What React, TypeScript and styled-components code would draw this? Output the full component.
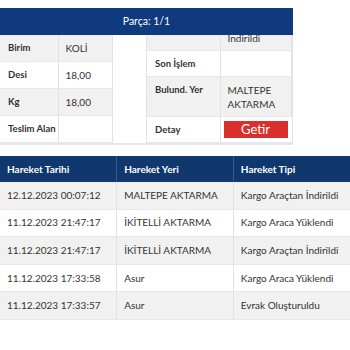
import styled, { createGlobalStyle } from 'styled-components';

const GlobalStyle = createGlobalStyle`
  html, body {
    margin: 0;
    padding: 0;
    background: #ffffff;
  }
  body {
    font-family: Lato, 'Open Sans', 'Liberation Sans', sans-serif;
    color: #333333;
  }
`;

const Page = styled.div`
  padding-top: 8px;
  width: 350px;
`;

const Panel = styled.section`
  width: 293px;
  border-bottom: 2px solid #e4e6ea;
`;

const PanelHeader = styled.div`
  height: 27px;
  line-height: 27px;
  background: #0f3a7d;
  color: #ffffff;
  font-size: 10.5px;
  text-align: center;
`;

const PanelBody = styled.div`
  display: grid;
  grid-template-columns: 147px 146px;
  grid-template-rows: 108px;
  overflow: hidden;
`;

const LeftCol = styled.div`
  border-right: 1px solid #e2e2e2;
  overflow: hidden;
`;

// rows sit at the bottom; whatever does not fit is clipped at the top
const RightCol = styled.div`
  display: flex;
  flex-direction: column;
  justify-content: flex-end;
  overflow: hidden;
  min-height: 0;
  border-right: 1px solid #e2e2e2;
`;

const InfoTable = styled.table<{ $width: number }>`
  width: ${(p) => p.$width}px;
  border-collapse: collapse;
  table-layout: fixed;
  flex-shrink: 0;
  font-size: 10px;
`;

const InfoRow = styled.tr`
  &:nth-child(odd) {
    background: #f1f1f1;
  }
  &:nth-child(even) {
    background: #ffffff;
  }
`;

const InfoLabel = styled.td<{ $pad: number }>`
  font-weight: 700;
  font-size: 9.5px;
  padding: ${(p) => p.$pad}px 8px;
  line-height: 14px;
  vertical-align: top;
  white-space: nowrap;
  border-right: 1px solid #e2e2e2;
  border-bottom: 1px solid #e8e8e8;
`;

const InfoValue = styled.td<{ $pad: number }>`
  padding: ${(p) => p.$pad}px 6px ${(p) => p.$pad}px 7px;
  line-height: 14px;
  vertical-align: top;
  border-right: 1px solid #e2e2e2;
  border-bottom: 1px solid #e8e8e8;
`;

const ButtonCell = styled.td`
  padding: 4px 5px 4px 3px;
  border-bottom: 1px solid #e8e8e8;
`;

const FetchButton = styled.button`
  display: block;
  width: 64px;
  height: 17px;
  padding: 0;
  border: none;
  background: #d9302e;
  color: #ffffff;
  font-family: inherit;
  font-size: 13px;
  line-height: 17px;
  cursor: pointer;
`;

const MoveTable = styled.table`
  width: 350px;
  margin-top: 11px;
  border-collapse: collapse;
  table-layout: fixed;
  font-size: 10px;
`;

const MoveHead = styled.th`
  background: #11376f;
  color: #ffffff;
  font-weight: 700;
  text-align: left;
  padding: 6.5px 7px;
  line-height: 13px;
  border-right: 1px solid #3a5a8a;
  &:last-child {
    border-right: none;
  }
`;

const MoveRow = styled.tr`
  &:nth-child(odd) {
    background: #f1f1f1;
  }
  &:nth-child(even) {
    background: #ffffff;
  }
`;

const MoveCell = styled.td`
  padding: 6.8px 7px;
  line-height: 13px;
  border-right: 1px solid #e2e2e2;
  border-bottom: 1px solid #e8e8e8;
  white-space: nowrap;
  &:last-child {
    border-right: none;
  }
`;

const leftRows = [
  ['Birim', 'KOLİ'],
  ['Desi', '18,00'],
  ['Kg', '18,00'],
  ['Teslim Alan', ''],
];

const moves = [
  ['12.12.2023 00:07:12', 'MALTEPE AKTARMA', 'Kargo Araçtan İndirildi'],
  ['11.12.2023 21:47:17', 'İKİTELLİ AKTARMA', 'Kargo Araca Yüklendi'],
  ['11.12.2023 21:47:17', 'İKİTELLİ AKTARMA', 'Kargo Araçtan İndirildi'],
  ['11.12.2023 17:33:58', 'Asur', 'Kargo Araca Yüklendi'],
  ['11.12.2023 17:33:57', 'Asur', 'Evrak Oluşturuldu'],
];

export default function App() {
  return (
    <Page>
      <GlobalStyle />
      <Panel>
        <PanelHeader>Parça: 1/1</PanelHeader>
        <PanelBody>
          <LeftCol>
            <InfoTable $width={113}>
              <colgroup>
                <col style={{ width: 58 }} />
                <col />
              </colgroup>
              <tbody>
                {leftRows.map(([label, value]) => (
                  <InfoRow key={label}>
                    <InfoLabel $pad={6}>{label}</InfoLabel>
                    <InfoValue $pad={6}>{value}</InfoValue>
                  </InfoRow>
                ))}
              </tbody>
            </InfoTable>
          </LeftCol>
          <RightCol>
            <InfoTable $width={145}>
              <colgroup>
                <col style={{ width: 73 }} />
                <col />
              </colgroup>
              <tbody>
                <InfoRow>
                  <InfoLabel $pad={5.5}>Son Durum</InfoLabel>
                  <InfoValue $pad={5.5}>
                    Kargo Araçtan
                    <br />
                    İndirildi
                  </InfoValue>
                </InfoRow>
                <InfoRow>
                  <InfoLabel $pad={5.5}>Son İşlem</InfoLabel>
                  <InfoValue $pad={5.5}></InfoValue>
                </InfoRow>
                <InfoRow>
                  <InfoLabel $pad={5.5}>Bulund. Yer</InfoLabel>
                  <InfoValue $pad={5.5}>MALTEPE AKTARMA</InfoValue>
                </InfoRow>
                <InfoRow>
                  <InfoLabel $pad={5.5}>Detay</InfoLabel>
                  <ButtonCell>
                    <FetchButton>Getir</FetchButton>
                  </ButtonCell>
                </InfoRow>
              </tbody>
            </InfoTable>
          </RightCol>
        </PanelBody>
      </Panel>
      <MoveTable>
        <thead>
          <tr>
            <MoveHead>Hareket Tarihi</MoveHead>
            <MoveHead>Hareket Yeri</MoveHead>
            <MoveHead>Hareket Tipi</MoveHead>
          </tr>
        </thead>
        <tbody>
          {moves.map((m, i) => (
            <MoveRow key={i}>
              <MoveCell>{m[0]}</MoveCell>
              <MoveCell>{m[1]}</MoveCell>
              <MoveCell>{m[2]}</MoveCell>
            </MoveRow>
          ))}
        </tbody>
      </MoveTable>
    </Page>
  );
}
